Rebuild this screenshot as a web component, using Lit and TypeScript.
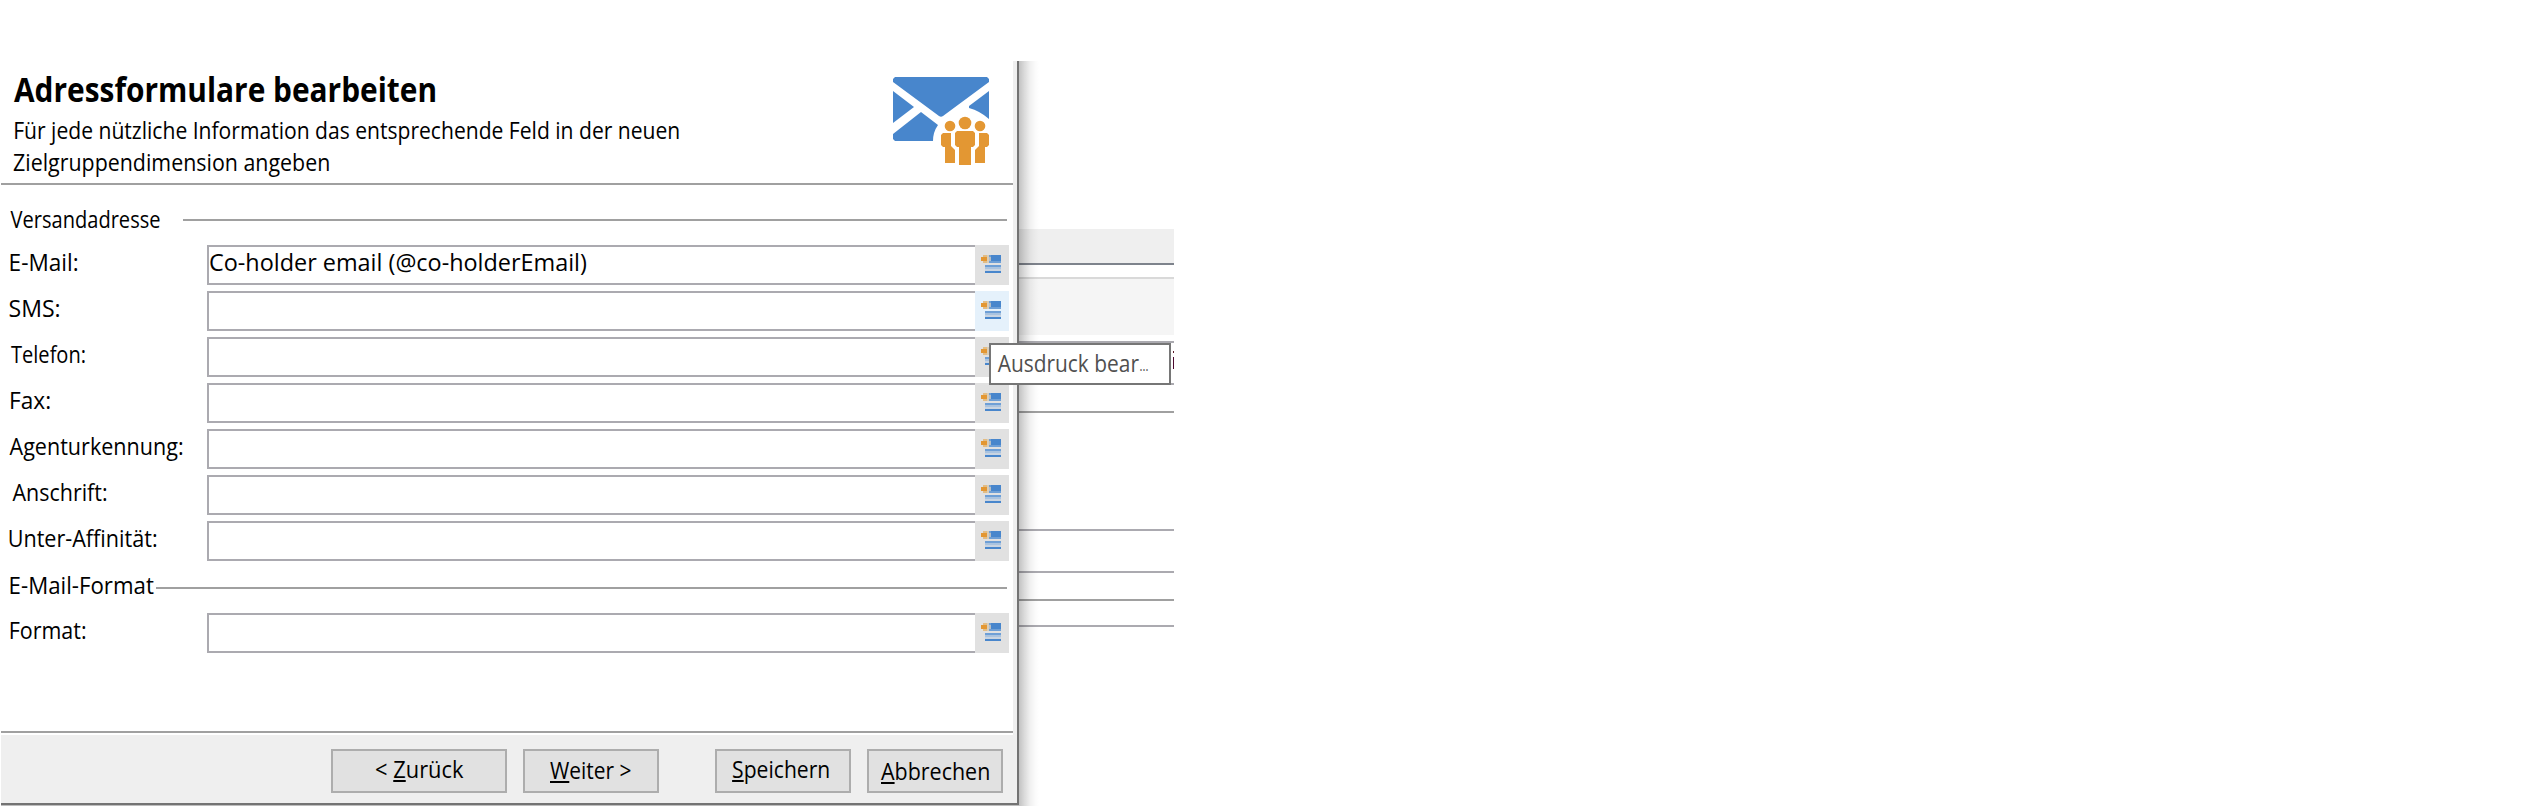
import { LitElement, html, css, svg, nothing } from "lit";
import { customElement, property } from "lit/decorators.js";

/* A single line of text whose ink runs from `start` over `span` pixels. */
@customElement("ui-text")
class UiText extends LitElement {
  @property() text = "";
  @property({ type: Number }) start = 0;
  @property({ type: Number }) span = 100;
  @property({ type: Number }) accel = -1;

  static styles = css`
    :host { display: block; height: 32px; line-height: 34px; white-space: pre; width: 0; }
    .ink { display: inline-block; transform-origin: 0 50%; }
    .accel { text-decoration: underline; text-decoration-thickness: 2px; text-underline-offset: 2px; text-decoration-skip-ink: none; }
  `;

  updated() {
    const ink = this.renderRoot.querySelector(".ink") as HTMLElement;
    const ctx = document.createElement("canvas").getContext("2d")!;
    const cs = getComputedStyle(ink);
    ctx.font = `${cs.fontWeight} ${cs.fontSize} ${cs.fontFamily}`;
    const m = ctx.measureText(this.text);
    const k = this.span / (m.actualBoundingBoxLeft + m.actualBoundingBoxRight);
    ink.style.transform = `translateX(${this.start + m.actualBoundingBoxLeft * k}px) scaleX(${k})`;
  }

  render() {
    const { text: t, accel: a } = this;
    return html`<span class="ink">${a < 0 ? t : html`${t.slice(0, a)}<span class="accel">${t[a]}</span>${t.slice(a + 1)}`}</span>`;
  }
}

@customElement("form-row")
class FormRow extends LitElement {
  @property() label = "";
  @property({ type: Number }) start = 10;
  @property({ type: Number }) span = 60;
  @property() value = "";
  @property({ type: Boolean }) hot = false;

  static styles = css`
    :host { display: flex; height: 40px; }
    .label { width: 206px; flex: none; }
    .field { box-sizing: border-box; width: 768px; border: 2px solid #abaab0; border-right: 0; background: #fff; }
    .field ui-text { margin-top: -2px; }
    .pick { width: 34px; background: #e1e1e1; }
    .pick.hot { background: #e5f1fb; }
    svg { display: block; margin: 10px 0 0 6px; }
  `;

  render() {
    return html`
      <div class="label"><ui-text .text=${this.label} .start=${this.start} .span=${this.span}></ui-text></div>
      <div class="field">${this.value ? html`<ui-text .text=${this.value} .start=${1} .span=${376}></ui-text>` : nothing}</div>
      <div class="pick ${this.hot ? "hot" : ""}">
        <svg width="20" height="18" viewBox="0 0 20 18" shape-rendering="crispEdges">
          ${svg`
          <path fill="#4886cc" d="M8 0h12v6H8zM4 16h16v2H4z"/>
          <path fill="#6e9fd6" d="M8 0h2v6H8zM8 6h12v2H8zM4 10h16v2H4z"/>
          <path fill="#a9c3e0" d="M4 12h16v2H4z"/>
          <path fill="#c9d4e1" d="M4 14h16v2H4z"/>
          <path fill="#e2bc84" d="M2 0h4v8H2z"/>
          <path fill="#d9cdb9" d="M6 0h2v8H6z"/>
          <path fill="#b3bdc6" d="M8 2h2v4H8z"/>
          <path fill="#e39733" d="M0 2h6v4H0z"/>`}
        </svg>
      </div>`;
  }
}

const rows = [
  { label: "E-Mail:", x: 9.5, w: 67, value: "Co-holder email (@co-holderEmail)" },
  { label: "SMS:", x: 8.5, w: 50, hot: true },
  { label: "Telefon:", x: 10, w: 74 },
  { label: "Fax:", x: 10, w: 39 },
  { label: "Agenturkennung:", x: 8.5, w: 173 },
  { label: "Anschrift:", x: 11.5, w: 94 },
  { label: "Unter-Affinität:", x: 8.5, w: 147 },
];

@customElement("app-root")
class AppRoot extends LitElement {
  static styles = css`
    :host { display: flex; box-sizing: border-box; width: 2548px; height: 812px; padding-top: 61px; background: #fff; overflow: hidden;
      font-family: "Open Sans", "Noto Sans", sans-serif; font-size: 23.5px; color: #000; }
    .dialog { position: relative; display: flex; flex-direction: column; box-sizing: border-box; width: 1018px; height: 745px; margin-left: 1px; z-index: 1; }
    .frame { display: flex; flex-direction: column; box-sizing: border-box; height: 744px; border-right: 2px solid #737373; border-bottom: 2px solid #737373; background: #fff; }
    .under { height: 1px; background: #bdbdbd; }
    .dialog::after { content: ""; position: absolute; left: 100%; top: 0; width: 20px; height: 745px;
      background: linear-gradient(90deg, rgba(0,0,0,.24), rgba(0,0,0,.14) 28%, rgba(0,0,0,.06) 55%, rgba(0,0,0,.02) 80%, transparent); }
    .upper { display: flex; flex-direction: column; box-sizing: border-box; height: 674px; border-right: 4px solid #efefef; }
    .head { display: flex; justify-content: space-between; box-sizing: border-box; height: 124px; border-bottom: 2px solid #a0a0a0; }
    .title { font-size: 34px; font-weight: 700; height: 46px; line-height: 48px; margin: 4px 0 2px; }
    .logo { margin: 16px 24px 0 0; }
    .section { display: flex; box-sizing: border-box; }
    .rule { flex: 1; height: 2px; background: #a0a0a0; margin-right: 6px; }
    .s1 { height: 60px; padding-top: 17px; }
    .s1 .rule { margin: 17px 6px 0 182px; }
    .s2 { padding: 6px 0 0; height: 52px; }
    .s2 ui-text { margin-top: 1px; }
    .s2 .rule { margin: 20px 6px 0 155px; }
    .rows { display: flex; flex-direction: column; gap: 6px; }
    .foot { display: flex; flex: 1; align-items: flex-start; padding: 14px 14px 0 330px; background: #efefef; }
    .footline { height: 2px; background: #a0a0a0; margin-top: 78px; }
    .btn { box-sizing: border-box; width: 136px; height: 44px; border: 2px solid #adadad; background: #e1e1e1; }
    .b1 { width: 176px; margin-right: 16px; }
    .b2 { margin-right: 56px; }
    .b3 { margin-right: 16px; }
    .tip { position: absolute; z-index: 2; left: 988px; top: 282px; display: flex; box-sizing: border-box; width: 182px; height: 42px; border: 2px solid #767676; background: #fff; color: #505050; }
    .dots { font-size: 16px; }
    .behind { display: grid; width: 155px; height: 745px; align-content: start; overflow: hidden; padding-top: 168px; box-sizing: border-box; }
    .band { height: 34px; background: #efefef; border-bottom: 2px solid #7e838c; }
    .pane { margin-top: 12px; height: 56px; border-top: 2px solid #d9d9d9; background: #f5f5f5; }
    .cell { margin-top: 6px; height: 40px; border-top: 2px solid #abaab0; border-bottom: 2px solid #abaab0; display: flex; flex-direction: column; align-items: flex-end; }
    .sliver-dot { width: 1px; height: 2px; margin-top: 8px; background: #5a1a28; }
    .sliver { width: 1px; height: 12px; margin-top: 4px; background: #4d0a30; }
    .l { height: 2px; background: #abaab0; }
    .g { background: #a0a0a0; }
    .l1 { margin-top: 26px; } .l2 { margin-top: 116px; } .l3 { margin-top: 40px; } .l4 { margin-top: 26px; } .l5 { margin-top: 24px; }
    .d1 { margin-top: 1px; } .d2 { margin-top: 2px; } .d3 { margin-top: 3px; }
  `;

  render() {
    return html`
      <div class="dialog">
        <div class="frame">
          <div class="upper">
            <div class="head">
              <div>
                <ui-text class="title" .text=${"Adressformulare bearbeiten"} .start=${13} .span=${421}></ui-text>
                <ui-text .text=${"Für jede nützliche Information das entsprechende Feld in der neuen"} .start=${14} .span=${664}></ui-text>
                <ui-text .text=${"Zielgruppendimension angeben"} .start=${12} .span=${316}></ui-text>
              </div>
              <svg class="logo" width="96" height="88" viewBox="0 0 96 88">
                <g fill="#4886cc">
                  <path d="M2 0h92l2 2v3L50 39q-2 1.500-4 0L0 5V2z"/>
                  <path d="M0 14l21 16L0 46zM96 14v28q-9-8-20-11v-2z"/>
                  <path d="M28 35l17 13q-5 7-5 16H2l-2-2v-5z"/>
                </g>
                <g fill="#e39733">
                  <circle cx="57" cy="49" r="5.300"/><circle cx="72" cy="46" r="6.300"/><circle cx="87" cy="49" r="5.300"/>
                  <path d="M50 56h8v13l4 4v13H52V70h-2l-2-2V58zM94 56h-8v13l-4 4v13h10V70h2l2-2V58z"/>
                  <path d="M64 54h16l2 2v12l-2 2h-2v18H66V70h-2l-2-2V56z"/>
                </g>
              </svg>
            </div>
            <div class="section s1">
              <ui-text .text=${"Versandadresse"} .start=${9.5} .span=${149}></ui-text>
              <div class="rule"></div>
            </div>
            <div class="rows">
              ${rows.map((r) => html`<form-row .label=${r.label} .start=${r.x} .span=${r.w} .value=${r.value ?? ""} .hot=${!!r.hot}></form-row>`)}
            </div>
            <div class="section s2">
              <ui-text .text=${"E-Mail-Format"} .start=${9.5} .span=${143}></ui-text>
              <div class="rule"></div>
            </div>
            <form-row .label=${"Format:"} .start=${9.5} .span=${75}></form-row>
            <div class="footline"></div>
          </div>
          <div class="foot">
            <div class="btn b1"><ui-text class="d1" .text=${"< Zurück"} .accel=${2} .start=${43} .span=${88}></ui-text></div>
            <div class="btn b2"><ui-text class="d2" .text=${"Weiter >"} .accel=${0} .start=${25} .span=${81}></ui-text></div>
            <div class="btn b3"><ui-text class="d1" .text=${"Speichern"} .accel=${0} .start=${16} .span=${96}></ui-text></div>
            <div class="btn"><ui-text class="d3" .text=${"Abbrechen"} .accel=${0} .start=${12} .span=${108}></ui-text></div>
          </div>
        </div>
        <div class="under"></div>
        <div class="tip">
          <ui-text class="d1" .text=${"Ausdruck bear"} .start=${6.7} .span=${141.6}></ui-text>
          <ui-text class="dots d3" .text=${"..."} .start=${149.3} .span=${8}></ui-text>
        </div>
      </div>
      <div class="behind">
        <div class="band"></div>
        <div class="pane"></div>
        <div class="cell"><div class="sliver-dot"></div><div class="sliver"></div></div>
        <div class="l g l1"></div>
        <div class="l l2"></div>
        <div class="l l3"></div>
        <div class="l g l4"></div>
        <div class="l l5"></div>
      </div>`;
  }
}
